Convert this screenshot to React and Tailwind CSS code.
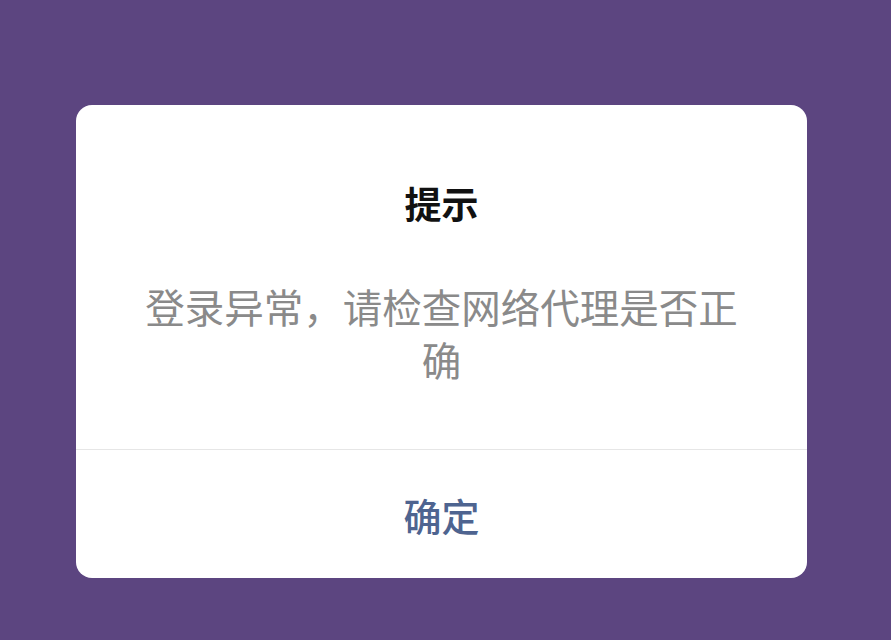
import React from "react";

const font = { fontFamily: '"Noto Sans CJK SC", "Noto Sans", sans-serif' };

const AlertDialog = () => {
  return (
    <div className="w-[731px] ml-[76px] mt-[105px] bg-white rounded-[16px] overflow-hidden">
      <div className="pt-[73px] pb-[64px] px-[62px] text-center">
        <h2 className="text-[37px] leading-[50px] font-bold text-[#111111]">提示</h2>
        <p className="mt-[51px] text-[39.5px] leading-[53px] text-[#8a8a8a]">
          登录异常，请检查网络代理是否正确
        </p>
      </div>
      <div className="border-t border-[#e6e6e6]">
        <button className="w-full h-[128px] text-[38px] text-[#4e6490] font-medium">确定</button>
      </div>
    </div>
  );
};

export default function App() {
  return (
    <div className="w-[891px] h-[640px] bg-[#5c4580] overflow-hidden" style={font}>
      <AlertDialog />
    </div>
  );
}
